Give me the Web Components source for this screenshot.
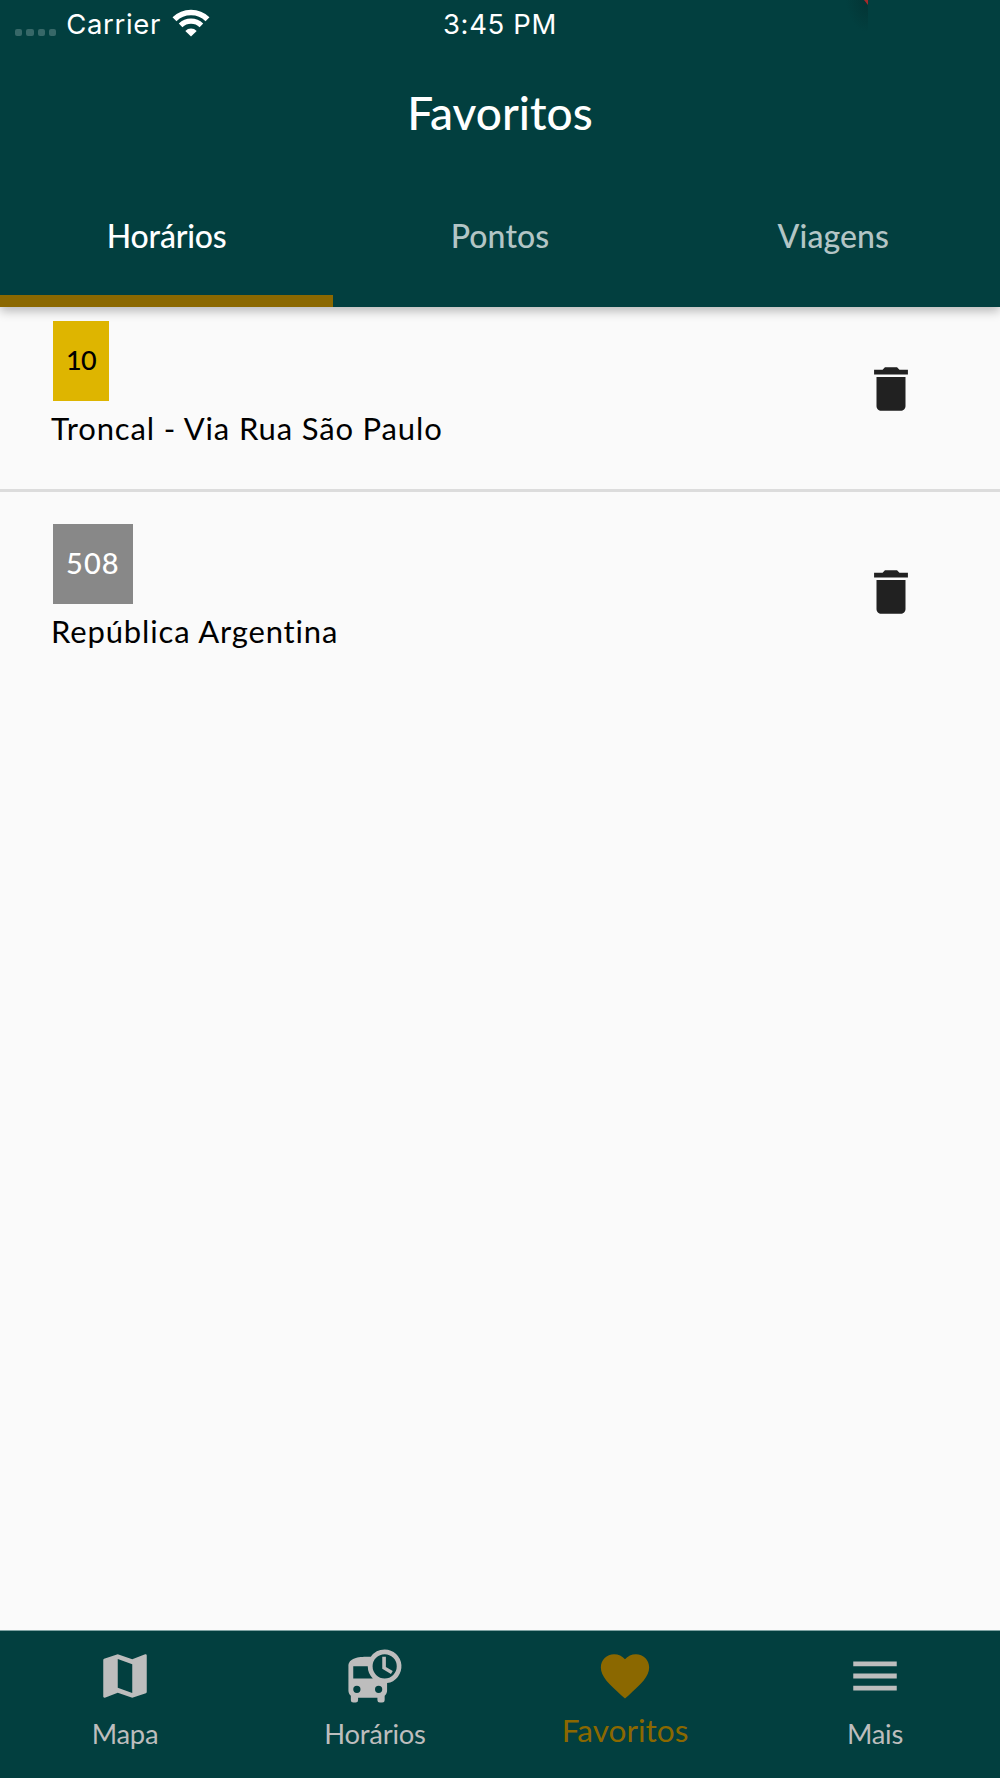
<!DOCTYPE html>
<html lang="pt-BR">
<head>
<meta charset="utf-8">
<title>Favoritos</title>
<style>
    html, body { margin: 0; height: 100%; }
    body { background: #fafafa; overflow: hidden; }
</style>
</head>
<body>
<app-shell>
    <status-bar slot="header" carrier="Carrier" time="3:45 PM"></status-bar>
    <page-title slot="header">Favoritos</page-title>
    <tab-strip slot="header">
        <tab-item active>Horários</tab-item>
        <tab-item>Pontos</tab-item>
        <tab-item>Viagens</tab-item>
    </tab-strip>

    <favorite-row>
        <line-badge slot="badge" style="letter-spacing: -.7px">10</line-badge>
        Troncal - Via Rua São Paulo
    </favorite-row>
    <favorite-row>
        <line-badge slot="badge" style="--badge: #888; color: #fff; font-size: 29px; letter-spacing: 1.1px">508</line-badge>
        República Argentina
    </favorite-row>

    <nav-item slot="nav" icon="map">Mapa</nav-item>
    <nav-item slot="nav" icon="bus">Horários</nav-item>
    <nav-item slot="nav" icon="heart" active>Favoritos</nav-item>
    <nav-item slot="nav" icon="menu">Mais</nav-item>
</app-shell>

<script>
const ICONS = {
    map: "M20.5 3l-.16.03L15 5.1 9 3 3.36 4.9c-.21.07-.36.25-.36.48V20.5c0 .28.22.5.5.5l.16-.03L9 18.9l6 2.1 5.64-1.9c.21-.07.36-.25.36-.48V3.5c0-.28-.22-.5-.5-.5zM15 19l-6-2.11V5l6 2.11V19z",
    bus: "M16 1a7 7 0 0 0-5.75 3H9C5 4 1 4.5 1 8v10c0 .88.39 1.67 1 2.22V22a1 1 0 0 0 1 1h1a1 1 0 0 0 1-1v-1h8v1a1 1 0 0 0 1 1h1a1 1 0 0 0 1-1v-1.78c.61-.55 1-1.34 1-2.22v-3.08A7 7 0 0 0 16 1zm0 2a5 5 0 1 1 0 10 5 5 0 0 1 0-10zM15 4v5l3.6 2.16.75-1.23-2.85-1.68V4zM3 8h6a7 7 0 0 0 2.1 5H3zM4.5 16a1.5 1.5 0 1 1 0 3 1.5 1.5 0 0 1 0-3zm9 0a1.5 1.5 0 1 1 0 3 1.5 1.5 0 0 1 0-3z",
    heart: "M12 21.35l-1.45-1.32C5.4 15.36 2 12.28 2 8.5 2 5.42 4.42 3 7.5 3c1.74 0 3.41.81 4.5 2.09C13.09 3.81 14.76 3 16.5 3 19.58 3 22 5.42 22 8.5c0 3.78-3.4 6.86-8.55 11.54L12 21.35z",
    menu: "M3 18h18v-2H3v2zm0-5h18v-2H3v2zm0-7v2h18V6H3z",
    trash: "M6 19c0 1.1.9 2 2 2h8c1.1 0 2-.9 2-2V7H6v12zM19 4h-3.5l-1-1h-5l-1 1H5v2h14V4z"
}

const icon = (name) => `<svg viewBox="0 0 24 24" width="58" height="58" fill="currentColor" fill-rule="evenodd"><path d="${ICONS[name]}"/></svg>`

class BaseElement extends HTMLElement {
    connectedCallback() {
        const shadow = this.attachShadow({ mode: "open" })
        shadow.innerHTML = `<style>${this.styles()}</style>${this.html()}`
    }
    html() { return `<slot></slot>` }
}

class AppShell extends BaseElement {
    styles() {
        return /* css */ `
            :host {
                display: flex;
                flex-direction: column;
                height: 100%;
                font-family: Lato, "Open Sans", sans-serif;
                font-size: 31px;
                color: #000;
            }
            header {
                background: #023f3f;
                color: #fff;
                z-index: 1;
                box-shadow: 0 4px 10px rgba(0, 0, 0, .27);
            }
            main { flex: 1; }
            nav {
                display: grid;
                grid-template-columns: repeat(4, 1fr);
                height: 147px;
                background: #023f3f;
                color: #bdbdbd;
                border-top: 1px solid #7fa3a3;
            }
        `
    }
    html() {
        return /* html */ `
            <header><slot name="header"></slot></header>
            <main><slot></slot></main>
            <nav><slot name="nav"></slot></nav>
        `
    }
}

class StatusBar extends BaseElement {
    styles() {
        return /* css */ `
            :host {
                position: relative;
                display: grid;
                grid-template-columns: 1fr auto 1fr;
                align-items: center;
                height: 48px;
                font: 400 27.5px/48px Inter, sans-serif;
                letter-spacing: .65px;
            }
            .left { display: flex; align-items: center; padding-left: 15px; }
            .dots { display: flex; gap: 4px; margin: 17px 10px 0 0; }
            .dots i { width: 7.3px; height: 7.3px; border-radius: 2px; background: #376868; }
            .left svg { margin: 0 0 2px 11px; }
            /* corner of a ribbon that peeks in from above */
            .ribbon {
                position: absolute;
                left: 846px;
                top: 0;
                width: 22px;
                height: 32px;
                background: radial-gradient(farthest-side at 100% 0, #033434, transparent);
            }
            .ribbon svg { display: block; margin-left: auto; }
        `
    }
    html() {
        return /* html */ `
            <div class="left">
                <div class="dots"><i></i><i></i><i></i><i></i></div>
                <span>${this.getAttribute("carrier")}</span>
                <svg width="38" height="28" viewBox="0 0 38 28" fill="none" stroke="#fff">
                    <path d="M2.5 10.2a23.5 23.5 0 0 1 33 0" stroke-width="5.6"/>
                    <path d="M8.6 16.4a15 15 0 0 1 20.8 0" stroke-width="5.2"/>
                    <path d="M19 27.5l-5.7-5.6a8.2 8.2 0 0 1 11.4 0z" fill="#fff" stroke="none"/>
                </svg>
            </div>
            <span>${this.getAttribute("time")}</span>
            <div class="ribbon"><svg width="4" height="5"><path d="M0 0h4v5z" fill="#a52a2a"/></svg></div>
        `
    }
}

class PageTitle extends BaseElement {
    styles() {
        return /* css */ `
            :host {
                display: block;
                text-align: center;
                font-size: 46px;
                font-weight: 500;
                line-height: 125px;
                padding-top: 2px;
            }
        `
    }
}

class TabStrip extends BaseElement {
    styles() {
        return /* css */ `
            :host { display: grid; grid-template-columns: repeat(3, 1fr); height: 132px; }
        `
    }
}

class TabItem extends BaseElement {
    styles() {
        return /* css */ `
            :host {
                text-align: center;
                font-size: 32px;
                font-weight: 500;
                line-height: 122px;
                color: #b3c5c5;
                border-bottom: 12px solid transparent;
                box-sizing: border-box;
                height: 132px;
                letter-spacing: .1px;
            }
            :host([active]) { color: #fff; border-color: #8b6800; letter-spacing: -.2px; }
        `
    }
}

class LineBadge extends BaseElement {
    styles() {
        return /* css */ `
            :host {
                display: block;
                width: max-content;
                padding: 0 13px;
                background: var(--badge, #deb500);
                font-size: 27px;
                font-weight: 500;
                line-height: 77px;
                height: 80px;
            }
        `
    }
}

class FavoriteRow extends BaseElement {
    styles() {
        return /* css */ `
            :host {
                display: flex;
                justify-content: space-between;
                align-items: center;
                box-sizing: border-box;
                height: 203px;
                padding: 32px 80px 44px 53px;
            }
            :host(:first-of-type) {
                height: 185px;
                padding-top: 14px;
                padding-bottom: 41px;
                border-bottom: 3px solid #dcdcdc;
            }
            .text { margin: 7px 0 0 -2px; line-height: 40px; letter-spacing: .85px; }
            svg { color: #212121; margin-top: 9px; }
        `
    }
    html() {
        return /* html */ `
            <div>
                <slot name="badge"></slot>
                <div class="text"><slot></slot></div>
            </div>
            ${icon("trash")}
        `
    }
}

class NavItem extends BaseElement {
    styles() {
        return /* css */ `
            :host {
                display: flex;
                flex-direction: column;
                align-items: center;
                padding-top: 16px;
                gap: 11px;
                font-size: 27.4px;
                line-height: 36px;
                letter-spacing: -.25px;
            }
            :host([active]) { color: #8b6800; font-size: 31.6px; gap: 7px; letter-spacing: 0; }
        `
    }
    html() {
        return `${icon(this.getAttribute("icon"))}<div><slot></slot></div>`
    }
}

customElements.define("app-shell", AppShell)
customElements.define("status-bar", StatusBar)
customElements.define("page-title", PageTitle)
customElements.define("tab-strip", TabStrip)
customElements.define("tab-item", TabItem)
customElements.define("line-badge", LineBadge)
customElements.define("favorite-row", FavoriteRow)
customElements.define("nav-item", NavItem)
</script>
</body>
</html>
